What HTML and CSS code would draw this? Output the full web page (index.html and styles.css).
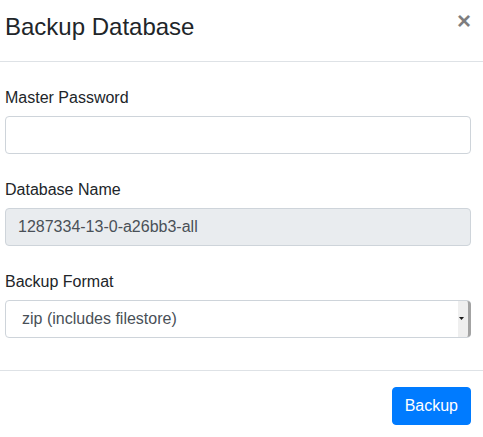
FILE: index.html
```html
<!DOCTYPE html>
<html lang="en">
<head>
<meta charset="utf-8">
<title>Backup Database</title>
<link rel="stylesheet" href="styles.css">
</head>
<body>
<div class="modal">
  <div class="modal-header">
    <h4 class="modal-title">Backup Database</h4>
    <button type="button" class="close" aria-label="Close">×</button>
  </div>
  <div class="modal-body">
    <div class="form-group">
      <label for="pw">Master Password</label>
      <input id="pw" type="password" class="form-control">
    </div>
    <div class="form-group">
      <label for="db">Database Name</label>
      <input id="db" type="text" class="form-control" value="1287334-13-0-a26bb3-all" disabled>
    </div>
    <div class="form-group">
      <label for="fmt">Backup Format</label>
      <div class="select-wrap">
        <select id="fmt" class="form-control form-select">
          <option>zip (includes filestore)</option>
          <option>pg_dump custom format (without filestore)</option>
        </select>
        <span class="select-arrow" aria-hidden="true">
          <svg width="5" height="3" viewBox="0 0 5 3"><path d="M0 0H5L2.5 3Z" fill="#1a1a1a"/></svg>
        </span>
      </div>
    </div>
  </div>
  <div class="modal-footer">
    <button type="button" class="btn btn-primary">Backup</button>
  </div>
</div>
</body>
</html>
```

FILE: styles.css
```css
* { box-sizing: border-box; }

html, body {
  margin: 0;
  padding: 0;
  background: #fff;
}

body {
  font-family: "Liberation Sans", Arial, sans-serif;
  font-size: 16px;
  line-height: 1.5;
  color: #212529;
}

.modal {
  width: 483px;
}

.modal-header {
  display: flex;
  align-items: flex-start;
  justify-content: space-between;
  padding: 9px 12px 16px 5px;
  border-bottom: 1px solid #dee2e6;
}

.modal-title {
  margin: 0;
  font-size: 24px;
  font-weight: 500;
  line-height: 1.5;
}

.close {
  margin: 0 0 0 auto;
  padding: 0;
  background: transparent;
  border: 0;
  font-family: "Liberation Sans", Arial, sans-serif;
  font-size: 24px;
  font-weight: 700;
  line-height: 1;
  color: #000;
  opacity: .5;
  cursor: pointer;
}

.modal-body {
  padding: 16px 12px 16px 5px;
}

.form-group {
  display: flex;
  flex-direction: column;
  margin-bottom: 16px;
}

.form-group label {
  display: block;
  margin: 8px 0 6px;
}

.form-control {
  display: block;
  width: 100%;
  height: 38px;
  padding: 6px 12px;
  font-family: "Liberation Sans", Arial, sans-serif;
  font-size: 16px;
  line-height: 1.5;
  color: #495057;
  background-color: #fff;
  border: 1px solid #ced4da;
  border-radius: 4px;
}

.form-control:disabled {
  background-color: #e9ecef;
  opacity: 1;
}

.select-wrap {
  position: relative;
}

.form-select {
  -webkit-appearance: none;
  appearance: none;
  padding-left: 16px;
  padding-right: 20px;
}

.select-arrow {
  position: absolute;
  top: 1px;
  right: 0;
  bottom: 1px;
  width: 13px;
  display: flex;
  align-items: center;
  justify-content: center;
  padding-right: 3px;
  padding-bottom: 2px;
  background: #efefef;
  border-right: 3px solid #a3a3a3;
  border-radius: 0 4px 4px 0;
  pointer-events: none;
}

.select-arrow svg {
  display: block;
}

.modal-footer {
  display: flex;
  justify-content: flex-end;
  padding: 16px 12px 16px 5px;
  border-top: 1px solid #dee2e6;
}

.btn {
  display: inline-block;
  height: 38px;
  padding: 6px 12px;
  font-family: "Liberation Sans", Arial, sans-serif;
  font-size: 16px;
  line-height: 1.5;
  border: 1px solid transparent;
  border-radius: 4px;
  cursor: pointer;
}

.btn-primary {
  color: #fff;
  background-color: #007bff;
  border-color: #007bff;
}
```
